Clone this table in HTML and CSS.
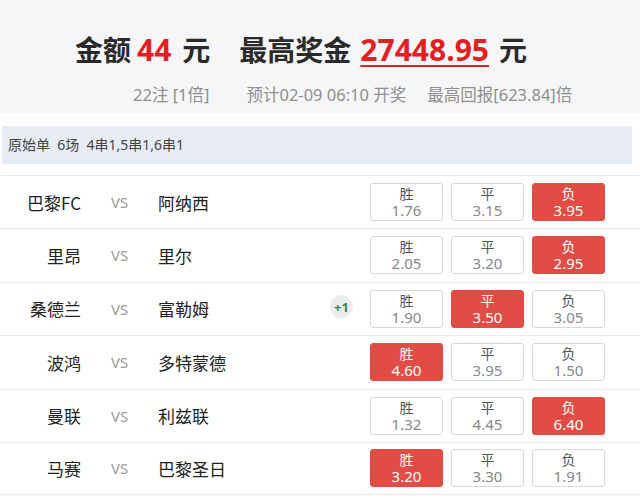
FILE: index.html
```html
<!DOCTYPE html>
<html lang="zh">
<head>
<meta charset="utf-8">
<link rel="stylesheet" href="styles.css">
</head>
<body>
<div class="head">
  <div class="title">
    <span class="t1">金额</span><span class="red n1">44</span><span class="t2">元</span>
    <span class="t3">最高奖金</span><span class="red ul n2">27448.95</span><span class="t4">元</span>
  </div>
  <div class="sub">
    <span class="s1">22注 [1倍]</span>
    <span class="s2">预计02-09 06:10 开奖</span>
    <span class="s3">最高回报[623.84]倍</span>
  </div>
</div>
<div class="bar">原始单&nbsp; 6场&nbsp; 4串1,5串1,6串1</div>
<div class="list">
  <div class="row">
    <div class="home">巴黎FC</div><div class="vs">VS</div><div class="away">阿纳西</div><div class="extra"></div>
    <div class="odds"><div class="btn"><b>胜</b><i>1.76</i></div><div class="btn"><b>平</b><i>3.15</i></div><div class="btn on"><b>负</b><i>3.95</i></div></div>
  </div>
  <div class="row">
    <div class="home">里昂</div><div class="vs">VS</div><div class="away">里尔</div><div class="extra"></div>
    <div class="odds"><div class="btn"><b>胜</b><i>2.05</i></div><div class="btn"><b>平</b><i>3.20</i></div><div class="btn on"><b>负</b><i>2.95</i></div></div>
  </div>
  <div class="row">
    <div class="home">桑德兰</div><div class="vs">VS</div><div class="away">富勒姆</div><div class="extra"><span class="badge">+1</span></div>
    <div class="odds"><div class="btn"><b>胜</b><i>1.90</i></div><div class="btn on"><b>平</b><i>3.50</i></div><div class="btn"><b>负</b><i>3.05</i></div></div>
  </div>
  <div class="row">
    <div class="home">波鸿</div><div class="vs">VS</div><div class="away">多特蒙德</div><div class="extra"></div>
    <div class="odds"><div class="btn on"><b>胜</b><i>4.60</i></div><div class="btn"><b>平</b><i>3.95</i></div><div class="btn"><b>负</b><i>1.50</i></div></div>
  </div>
  <div class="row">
    <div class="home">曼联</div><div class="vs">VS</div><div class="away">利兹联</div><div class="extra"></div>
    <div class="odds"><div class="btn"><b>胜</b><i>1.32</i></div><div class="btn"><b>平</b><i>4.45</i></div><div class="btn on"><b>负</b><i>6.40</i></div></div>
  </div>
  <div class="row">
    <div class="home">马赛</div><div class="vs">VS</div><div class="away">巴黎圣日</div><div class="extra"></div>
    <div class="odds"><div class="btn on"><b>胜</b><i>3.20</i></div><div class="btn"><b>平</b><i>3.30</i></div><div class="btn"><b>负</b><i>1.91</i></div></div>
  </div>
</div>
</body>
</html>
```
FILE: styles.css
```css
* { box-sizing: border-box; }
body {
  margin: 0;
  background: #fff;
  font-family: "Noto Sans", "Noto Sans CJK SC", sans-serif;
  color: #222;
}
.head {
  height: 113px;
  background: #f6f6f8;
  padding-top: 29px;
}
.title {
  padding-left: 75px;
  font-family: "Noto Sans CJK SC", sans-serif;
  font-size: 28px;
  font-weight: 700;
  line-height: 40px;
  color: #2a2a2a;
  white-space: nowrap;
  display: flex;
  align-items: baseline;
}
.n1 { margin-left: 6px; }
.t2 { margin-left: 11px; }
.t3 { margin-left: 29px; }
.n2 { margin-left: 9px; }
.t4 { margin-left: 10px; }
.red { color: #e3201f; font-family: "Open Sans", sans-serif; font-weight: 700; font-size: 30px; }
.ul { text-decoration: underline; text-decoration-thickness: 2px; text-underline-offset: 4px; }
.sub {
  margin-top: 15px;
  font-family: "Noto Sans", "Noto Sans CJK SC", sans-serif;
  font-size: 16.5px;
  line-height: 20px;
  color: #8f8f8f;
  white-space: nowrap;
  display: flex;
  padding-left: 133px;
}
.s2 { margin-left: 37px; }
.s3 { margin-left: 21px; }
.bar {
  margin: 13px 0 0 2px;
  width: 630px;
  height: 38px;
  background: #e8edf5;
  font-size: 14px;
  line-height: 38px;
  padding-left: 6px;
  color: #444;
  white-space: nowrap;
}
.list { margin-top: 11px; }
.row {
  display: flex;
  align-items: center;
  border-top: 1px solid #ececec;
  padding: 7px 0 7.4px;
  height: 53.4px;
}
.row:last-child { border-bottom: 1px solid #ececec; }
.home {
  width: 81px;
  text-align: right;
  font-family: "Noto Sans CJK SC", sans-serif;
  font-size: 17px;
  color: #222;
}
.vs {
  width: 77px;
  text-align: center;
  font-size: 15px;
  color: #9a9a9a;
}
.away {
  width: 162px;
  font-family: "Noto Sans CJK SC", sans-serif;
  font-size: 17px;
  color: #222;
}
.extra {
  width: 50px;
  display: flex;
  align-items: center;
  padding-left: 10px;
}
.badge {
  width: 23px;
  height: 23px;
  border-radius: 50%;
  background: #ececec;
  color: #2b8a57;
  font-size: 13px;
  font-weight: 700;
  display: flex;
  align-items: center;
  justify-content: center;
  margin-top: -4px;
}
.odds { display: flex; gap: 8px; }
.btn {
  width: 73px;
  height: 38px;
  border: 1px solid #d9d9d9;
  border-radius: 3px;
  background: #fff;
  display: flex;
  flex-direction: column;
  align-items: center;
  justify-content: center;
  gap: 3px;
}
.btn b {
  font-family: "Noto Sans CJK SC", sans-serif;
  font-weight: 400;
  font-size: 14px;
  line-height: 14px;
  color: #555;
}
.btn i {
  font-style: normal;
  font-size: 15px;
  line-height: 15px;
  color: #888;
}
.btn.on {
  background: #e14d45;
  border-color: #e14d45;
}
.btn.on b, .btn.on i { color: #fff; }
```
